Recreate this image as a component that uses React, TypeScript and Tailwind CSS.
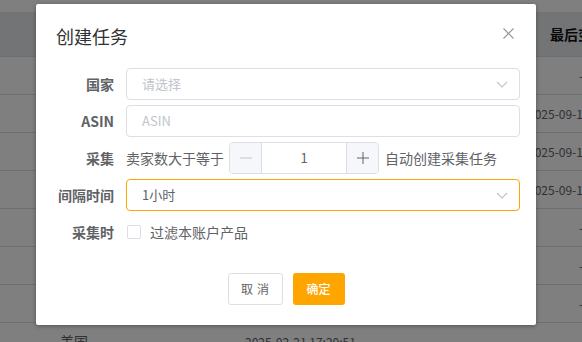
import React from "react";

const rows = [
  { country: "美国", created: "2025-03-02 09:15:20", last: "-" },
  { country: "美国", created: "2025-03-01 11:42:08", last: "2025-09-17 10:20:31" },
  { country: "英国", created: "2025-02-28 16:05:44", last: "2025-09-17 10:18:02" },
  { country: "德国", created: "2025-02-27 13:30:12", last: "2025-09-17 10:11:47" },
  { country: "美国", created: "2025-02-25 08:21:36", last: "-" },
  { country: "日本", created: "2025-02-24 19:47:55", last: "-" },
  { country: "美国", created: "2025-02-22 10:03:19", last: "-" },
  { country: "美国", created: "2025-02-21 17:20:51", last: "-" },
];

function Chevron() {
  return (
    <svg width="12" height="7" viewBox="0 0 12 7" className="shrink-0">
      <path d="M1 1 L6 6 L11 1" fill="none" stroke="#c0c4cc" strokeWidth="1.1" />
    </svg>
  );
}

function Label({ children }: { children: React.ReactNode }) {
  return (
    <div className="w-[70px] shrink-0 pr-3 text-right text-[14px] font-bold text-[#606266]">
      {children}
    </div>
  );
}

export default function App() {
  return (
    <div
      className="relative h-[342px] w-[582px] overflow-hidden bg-white"
      style={{ fontFamily: '"Noto Sans CJK SC", "Noto Sans", sans-serif' }}
    >
      {/* 背景表格 */}
      <div className="pt-[12px]">
        <div className="flex h-[45px] items-center border-b border-[#dcdfe6] bg-[#e6e8eb] whitespace-nowrap">
          <div className="w-[245px] shrink-0 pl-[60px] text-[14px] font-bold text-[#303133]">国家</div>
          <div className="w-[305px] shrink-0 text-[14px] font-bold text-[#303133]">创建时间</div>
          <div className="shrink-0 text-[14px] font-bold text-[#111]">最后变更时间</div>
        </div>
        {rows.map((r, i) => (
          <div
            key={i}
            className="flex h-[38px] items-center border-b border-[#dcdfe6] whitespace-nowrap text-[12px] text-[#606266]"
          >
            <div className="w-[245px] shrink-0 pl-[60px] text-[14px]">{r.country}</div>
            <div className="w-[283px] shrink-0">{r.created}</div>
            <div className={r.last === "-" ? "shrink-0 pl-[51px]" : "shrink-0"}>{r.last}</div>
          </div>
        ))}
      </div>

      {/* 遮罩 */}
      <div className="absolute inset-0 bg-black/50" />

      {/* 弹窗 */}
      <div className="absolute left-[36px] top-[4px] w-[500px] rounded-[2px] bg-white pb-5 pl-5 pr-4 pt-5 shadow-[0_1px_4px_rgba(0,0,0,0.35)]">
        <div className="text-[18px] leading-[24px] text-[#303133]">创建任务</div>
        <svg
          width="11"
          height="11"
          viewBox="0 0 11 11"
          className="absolute right-[22px] top-[24px]"
        >
          <path d="M0.5 0.5 L10.5 10.5 M10.5 0.5 L0.5 10.5" stroke="#909399" strokeWidth="1.1" />
        </svg>

        <div className="mt-5 flex flex-col gap-[5px]">
          <div className="flex h-[32px] items-center">
            <Label>国家</Label>
            <div className="flex h-[32px] flex-1 items-center justify-between rounded-[4px] border border-[#dcdfe6] pl-[15px] pr-[11px] text-[13px] text-[#c0c4cc]">
              <span>请选择</span>
              <Chevron />
            </div>
          </div>

          <div className="flex h-[32px] items-center">
            <Label>ASIN</Label>
            <div className="flex h-[32px] flex-1 items-center rounded-[4px] border border-[#dcdfe6] pl-[15px] text-[13px] text-[#c0c4cc]">
              ASIN
            </div>
          </div>

          <div className="flex h-[32px] items-center">
            <Label>采集</Label>
            <span className="text-[14px] text-[#606266]">卖家数大于等于</span>
            <div className="ml-[5px] flex h-[32px] w-[150px] overflow-hidden rounded-[4px] border border-[#dcdfe6]">
              <div className="flex w-[32px] items-center justify-center border-r border-[#dcdfe6] bg-[#f5f7fa]">
                <svg width="12" height="2" viewBox="0 0 12 2">
                  <path d="M0 1 H12" stroke="#c0c4cc" strokeWidth="1" />
                </svg>
              </div>
              <div className="flex flex-1 items-center justify-center text-[13px] text-[#606266]">1</div>
              <div className="flex w-[32px] items-center justify-center border-l border-[#dcdfe6] bg-[#f5f7fa]">
                <svg width="12" height="12" viewBox="0 0 12 12">
                  <path d="M0 6 H12 M6 0 V12" stroke="#606266" strokeWidth="1" />
                </svg>
              </div>
            </div>
            <span className="ml-[6px] text-[14px] text-[#606266]">自动创建采集任务</span>
          </div>

          <div className="flex h-[32px] items-center">
            <Label>间隔时间</Label>
            <div className="flex h-[32px] flex-1 items-center justify-between rounded-[4px] border border-[#ffa500] pl-[15px] pr-[11px] text-[13px] text-[#606266]">
              <span>1小时</span>
              <Chevron />
            </div>
          </div>

          <div className="flex h-[32px] items-center">
            <Label>采集时</Label>
            <div className="ml-[1px] h-[14px] w-[14px] rounded-[2px] border border-[#dcdfe6] bg-white" />
            <span className="ml-[9px] text-[14px] text-[#606266]">过滤本账户产品</span>
          </div>
        </div>

        <div className="mt-[25px] flex justify-center gap-[10px] pr-1">
          <button className="flex h-[32px] w-[55px] items-center justify-center gap-[4px] rounded-[3px] border border-[#dcdfe6] bg-white text-[12px] text-[#606266]">
            <span>取</span>
            <span>消</span>
          </button>
          <button className="h-[32px] w-[52px] rounded-[3px] bg-[#ffa500] text-[12px] font-medium text-white">
            确定
          </button>
        </div>
      </div>
    </div>
  );
}
